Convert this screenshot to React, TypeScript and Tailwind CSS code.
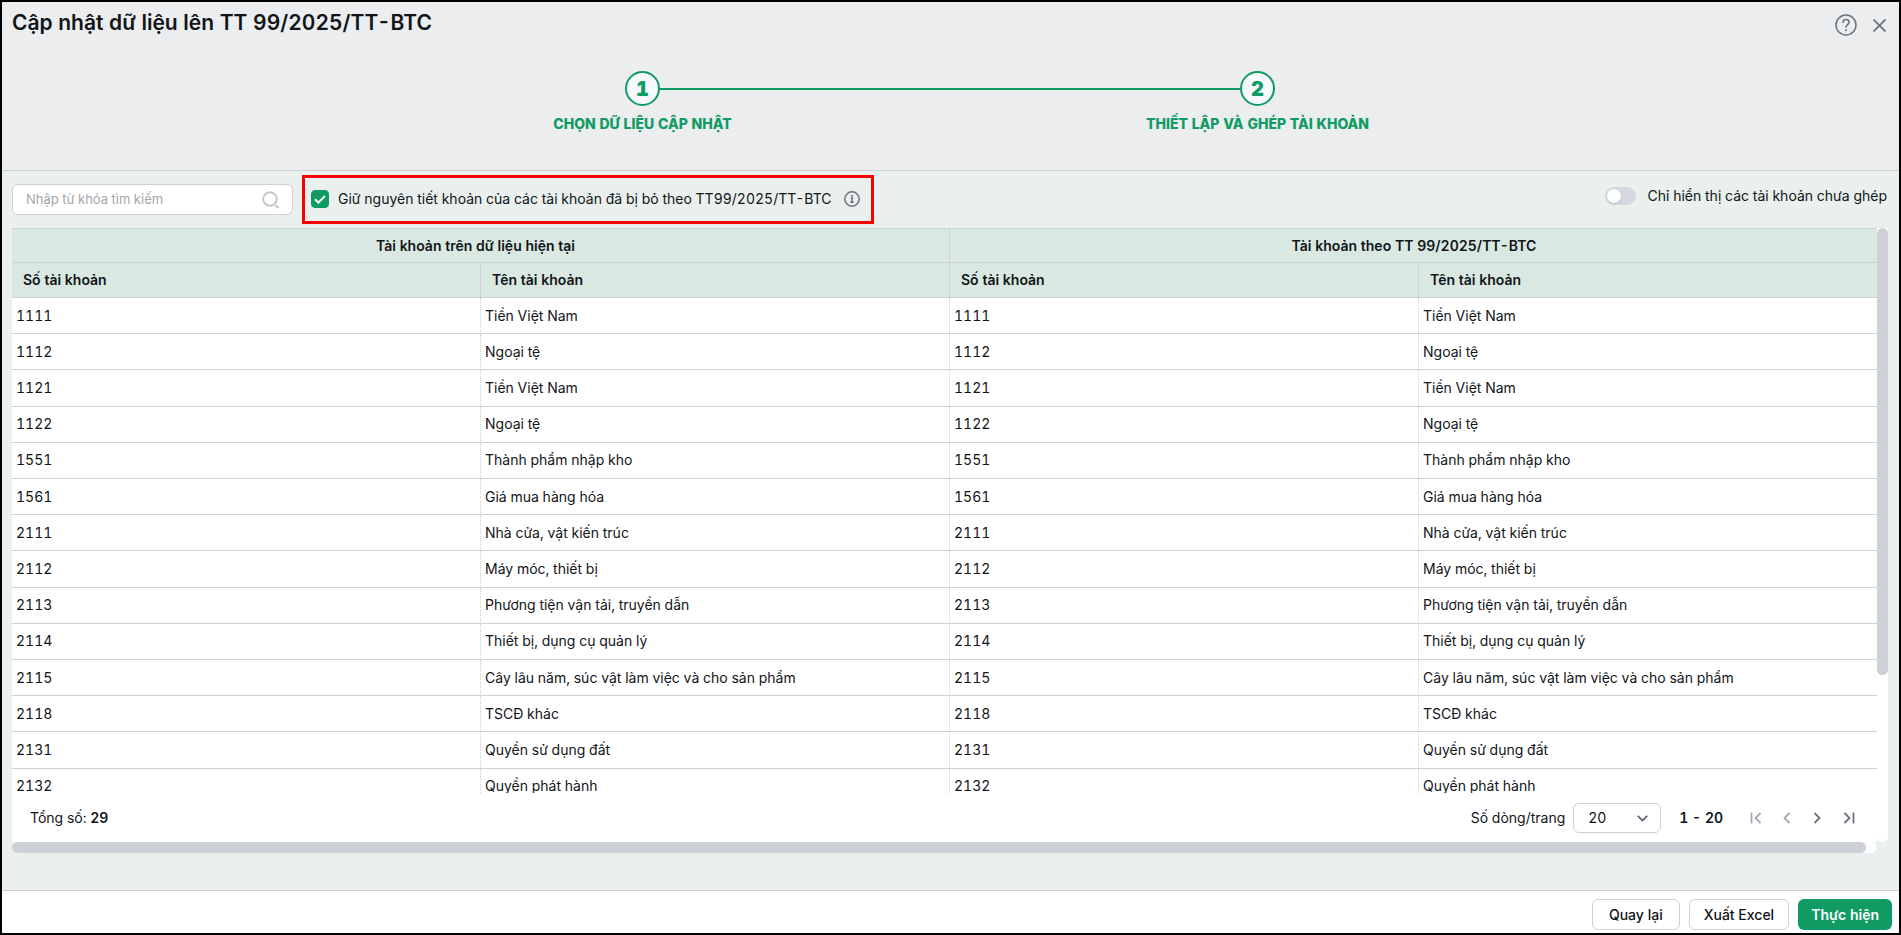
import { useState } from 'react';
import { clsx } from 'clsx';

const accounts = [
  { code: '1111', name: 'Tiền Việt Nam' },
  { code: '1112', name: 'Ngoại tệ' },
  { code: '1121', name: 'Tiền Việt Nam' },
  { code: '1122', name: 'Ngoại tệ' },
  { code: '1551', name: 'Thành phẩm nhập kho' },
  { code: '1561', name: 'Giá mua hàng hóa' },
  { code: '2111', name: 'Nhà cửa, vật kiến trúc' },
  { code: '2112', name: 'Máy móc, thiết bị' },
  { code: '2113', name: 'Phương tiện vận tải, truyền dẫn' },
  { code: '2114', name: 'Thiết bị, dụng cụ quản lý' },
  { code: '2115', name: 'Cây lâu năm, súc vật làm việc và cho sản phẩm' },
  { code: '2118', name: 'TSCĐ khác' },
  { code: '2131', name: 'Quyền sử dụng đất' },
  { code: '2132', name: 'Quyền phát hành' },
];

const steps = ['CHỌN DỮ LIỆU CẬP NHẬT', 'THIẾT LẬP VÀ GHÉP TÀI KHOẢN'];

function Header() {
  return (
    <header className="h-[169px] shrink-0 border-b border-[#cdd0d6] bg-[#ebedef]">
      <div className="flex items-start justify-between pl-[10px] pr-[13px] pt-[6px]">
        <h1 className="text-[21px] leading-[30px] font-semibold">Cập nhật dữ liệu lên TT 99/2025/TT-BTC</h1>
        <div className="flex items-center gap-4 pt-[6px] text-[#6b7280]">
          <button type="button" aria-label="Trợ giúp">
            <svg width="22" height="22" viewBox="0 0 22 22" fill="none" stroke="currentColor" strokeWidth="1.5">
              <circle cx="11" cy="11" r="10" />
              <path d="M8 8.4C8 6.7 9.3 5.6 11 5.6s3 1.1 3 2.7c0 2.2-3 2.4-3 5" strokeLinecap="round" />
              <circle cx="11" cy="16.2" r="1" fill="currentColor" stroke="none" />
            </svg>
          </button>
          <button type="button" aria-label="Đóng">
            <svg width="13" height="13" viewBox="0 0 13 13" fill="none" stroke="currentColor" strokeWidth="1.8">
              <path d="M0.5 0.5l12 12M12.5 0.5l-12 12" />
            </svg>
          </button>
        </div>
      </div>

      <ol className="mx-auto mt-[33px] grid w-[1231px] max-w-full grid-cols-2 pr-px">
        {steps.map((label, i) => (
          <li key={label} className="flex flex-col items-center text-[#119b64]">
            <div className="flex w-full items-center">
              <span className={clsx('h-[2px] flex-1', i > 0 && 'bg-[#119b64]')} />
              <span className="flex size-[35px] items-center justify-center rounded-full border-2 border-[#119b64] bg-[#f8f9fd] text-[20px] leading-none font-black">
                {i + 1}
              </span>
              <span className={clsx('h-[2px] flex-1', i < steps.length - 1 && 'bg-[#119b64]')} />
            </div>
            <span className="mt-2 text-[14px] leading-5 font-extrabold">{label}</span>
          </li>
        ))}
      </ol>
    </header>
  );
}

function Toolbar() {
  const [keep, setKeep] = useState(true);
  const [onlyUnmapped, setOnlyUnmapped] = useState(false);

  return (
    <div className="flex h-[57px] shrink-0 items-center">
      <label className="flex h-[31px] w-[281px] items-center rounded-md border border-[#cdd0d6] bg-white pr-3 pl-[13px]">
        <input
          type="text"
          aria-label="Tìm kiếm"
          placeholder="Nhập từ khóa tìm kiếm"
          className="min-w-0 flex-1 text-[13px] outline-none placeholder:text-[#a3a6ae]"
        />
        <svg width="18" height="18" viewBox="0 0 18 18" fill="none" stroke="#c8c8c8" strokeWidth="2">
          <circle cx="8" cy="8" r="6.8" />
          <path d="M13.4 14l3 3" strokeWidth="2.4" />
        </svg>
      </label>

      <div className="ml-[9px] flex h-[49px] items-center gap-3 border-3 border-[#ff0000] pr-[11px] pb-px pl-[6px]">
        <label className="flex items-center gap-[9px]">
          <input
            type="checkbox"
            checked={keep}
            onChange={(e) => setKeep(e.target.checked)}
            className="peer sr-only"
          />
          <span className="flex size-[18px] items-center justify-center rounded border border-[#cdd0d6] bg-white peer-checked:border-[#119b64] peer-checked:bg-[#119b64]">
            <svg width="12" height="9" viewBox="0 0 12 9" fill="none" stroke="#fff" strokeWidth="2">
              <path d="M1 4.2l3.4 3.4L11 1" />
            </svg>
          </span>
          <span className="text-[14px] leading-5">
            Giữ nguyên tiết khoản của các tài khoản đã bị bỏ theo TT99/2025/TT-BTC
          </span>
        </label>
        <svg width="16" height="16" viewBox="0 0 16 16" fill="none" stroke="#6b7280" strokeWidth="1.5">
          <circle cx="8" cy="8" r="7.2" />
          <path d="M6.6 7h1.6v4M6.2 11.3h3.6" />
          <circle cx="8" cy="4.8" r="1" fill="#6b7280" stroke="none" />
        </svg>
      </div>

      <label className="mb-[7px] ml-auto flex items-center gap-3 pr-px">
        <input
          type="checkbox"
          role="switch"
          checked={onlyUnmapped}
          onChange={(e) => setOnlyUnmapped(e.target.checked)}
          className="peer sr-only"
        />
        <span className="flex h-[18px] w-[31px] items-center rounded-full bg-[#d5d8de] px-[2px] peer-checked:justify-end peer-checked:bg-[#119b64]">
          <span className="size-[14px] rounded-full bg-white shadow-sm" />
        </span>
        <span className="text-[14px] leading-5">Chỉ hiển thị các tài khoản chưa ghép</span>
      </label>
    </div>
  );
}

function AccountTable() {
  return (
    <table className="h-[577px] w-[calc(100%+11px)] table-fixed border-separate border-spacing-0 text-left text-[14px] leading-5">
      <thead className="bg-[#d9e8e1]">
        <tr className="h-[35px]">
          <th colSpan={2} className="border-y border-r border-[#cdd0d6] pr-[10px] text-center font-semibold">
            Tài khoản trên dữ liệu hiện tại
          </th>
          <th colSpan={2} className="border-y border-[#cdd0d6] pr-[10px] text-center font-semibold">
            Tài khoản theo TT 99/2025/TT-BTC
          </th>
        </tr>
        <tr className="h-[35px]">
          {['Số tài khoản', 'Tên tài khoản', 'Số tài khoản', 'Tên tài khoản'].map((title, i) => (
            <th key={i} className="border-r border-b border-[#cdd0d6] pl-[11px] font-semibold">
              {title}
            </th>
          ))}
        </tr>
      </thead>
      <tbody>
        {accounts.map((acc) => (
          <tr key={acc.code}>
            {[acc.code, acc.name, acc.code, acc.name].map((value, i) => (
              <td key={i} className="border-r border-b border-[#cdd0d6] pl-1 [border-right-style:dotted]">
                {value}
              </td>
            ))}
          </tr>
        ))}
      </tbody>
    </table>
  );
}

function Pagination() {
  return (
    <div className="flex h-[49px] items-center justify-between pr-[22px] pl-[18px] text-[14px]">
      <p>
        Tổng số: <b className="font-semibold">29</b>
      </p>
      <div className="flex items-center">
        <label htmlFor="page-size">Số dòng/trang</label>
        <div className="relative ml-2">
          <select
            id="page-size"
            defaultValue="20"
            className="h-[30px] w-[88px] appearance-none rounded-md border border-[#cdd0d6] bg-white pl-[14px]"
          >
            <option>10</option>
            <option>20</option>
            <option>50</option>
          </select>
          <svg
            className="pointer-events-none absolute top-[12px] right-[13px]"
            width="11"
            height="7"
            viewBox="0 0 11 7"
            fill="none"
            stroke="#4b5563"
            strokeWidth="1.6"
          >
            <path d="M0.7 0.7l4.8 4.8L10.3 0.7" />
          </svg>
        </div>
        <b className="ml-[18px] font-semibold">1 - 20</b>
        <div className="ml-[27px] flex items-center text-[#6b7280]">
          <button type="button" aria-label="Trang đầu" className="text-[#a5a9b5]">
            <svg width="12" height="12" viewBox="0 0 12 12" fill="none" stroke="currentColor" strokeWidth="1.8">
              <path d="M1.5 0.5v11M10.5 1L5.5 6l5 5" />
            </svg>
          </button>
          <button type="button" aria-label="Trang trước" className="ml-[21px] text-[#a5a9b5]">
            <svg width="8" height="12" viewBox="0 0 8 12" fill="none" stroke="currentColor" strokeWidth="1.8">
              <path d="M6.5 1l-5 5 5 5" />
            </svg>
          </button>
          <button type="button" aria-label="Trang sau" className="ml-[22px]">
            <svg width="8" height="12" viewBox="0 0 8 12" fill="none" stroke="currentColor" strokeWidth="1.8">
              <path d="M1.5 1l5 5-5 5" />
            </svg>
          </button>
          <button type="button" aria-label="Trang cuối" className="ml-[22px]">
            <svg width="12" height="12" viewBox="0 0 12 12" fill="none" stroke="currentColor" strokeWidth="1.8">
              <path d="M10.5 0.5v11M1.5 1l5 5-5 5" />
            </svg>
          </button>
        </div>
      </div>
    </div>
  );
}

export default function App() {
  return (
    <div className="flex min-h-screen flex-col border-2 border-black bg-[#e9f0ee] font-[Inter,sans-serif] text-[#111418] tabular-nums">
      <Header />

      <main className="flex flex-1 flex-col pr-[11px] pl-[10px]">
        <Toolbar />
        <div className="flex">
          <div className="min-w-0 flex-1 bg-white">
            <div className="h-[565px] overflow-hidden">
              <AccountTable />
            </div>
            <Pagination />
          </div>
          <div className="w-[11px] rounded-b-full bg-white">
            <div className="h-[447px] rounded-full bg-[#cdd0d6]" />
          </div>
        </div>
        <div className="mr-[11px] rounded-full bg-white pr-[11px]">
          <div className="h-[11px] rounded-full bg-[#cdd0d6]" />
        </div>
      </main>

      <footer className="flex h-[43px] shrink-0 items-center justify-end gap-[9px] border-t border-[#cdd0d6] bg-white pt-[4px] pr-[7px] text-[14px] font-medium">
        <button type="button" className="h-[31px] rounded-md border border-[#cdd0d6] bg-white px-4">
          Quay lại
        </button>
        <button type="button" className="h-[31px] rounded-md border border-[#cdd0d6] bg-white px-[14px]">
          Xuất Excel
        </button>
        <button type="button" className="h-[31px] rounded-md bg-[#119b64] px-[13px] font-semibold text-white">
          Thực hiện
        </button>
      </footer>
    </div>
  );
}
